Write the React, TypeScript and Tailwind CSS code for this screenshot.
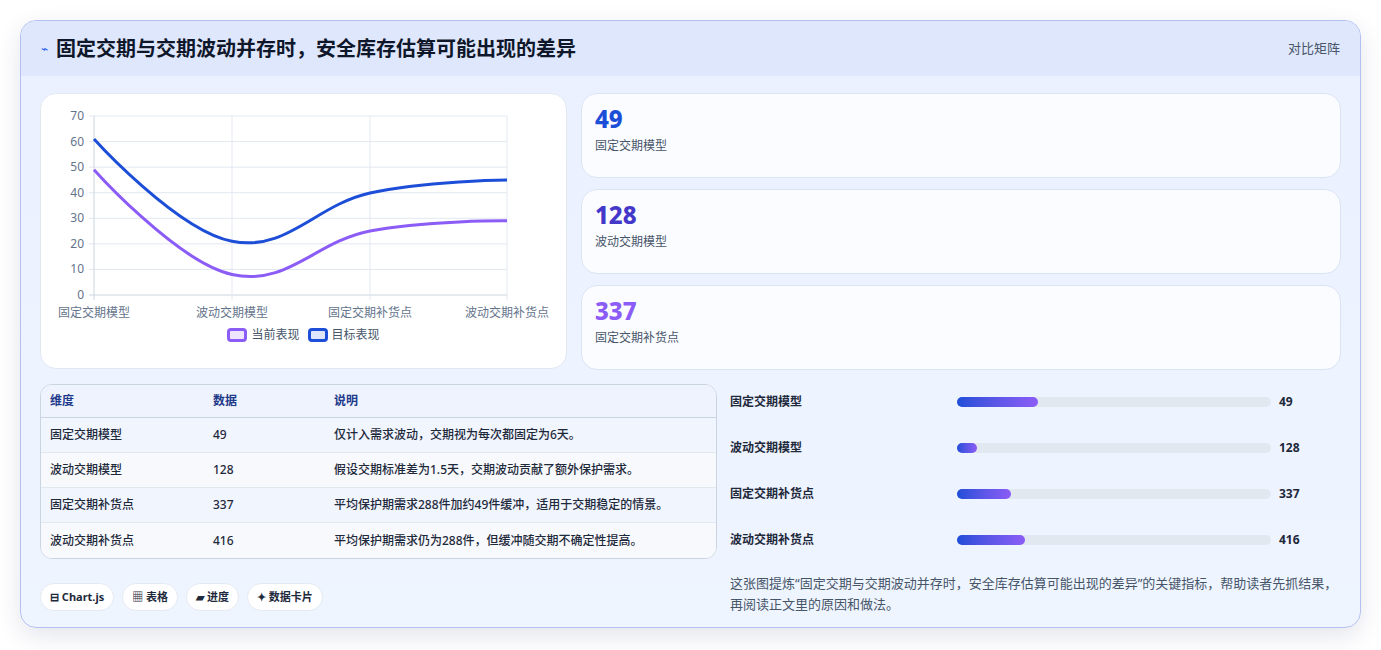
const font = { fontFamily: '"Noto Sans", "Noto Sans CJK SC", sans-serif' };

const stats = [
  { v: "49", label: "固定交期模型", color: "text-[#1d4ed8]" },
  { v: "128", label: "波动交期模型", color: "text-[#4338ca]" },
  { v: "337", label: "固定交期补货点", color: "text-[#8b5cf6]" },
];

const rows = [
  ["固定交期模型", "49", "仅计入需求波动，交期视为每次都固定为6天。"],
  ["波动交期模型", "128", "假设交期标准差为1.5天，交期波动贡献了额外保护需求。"],
  ["固定交期补货点", "337", "平均保护期需求288件加约49件缓冲，适用于交期稳定的情景。"],
  ["波动交期补货点", "416", "平均保护期需求仍为288件，但缓冲随交期不确定性提高。"],
];

const bars = [
  { label: "固定交期模型", v: "49", w: 81 },
  { label: "波动交期模型", v: "128", w: 20 },
  { label: "固定交期补货点", v: "337", w: 54 },
  { label: "波动交期补货点", v: "416", w: 68 },
];

function Chart() {
  const yTicks = [0, 10, 20, 30, 40, 50, 60, 70];
  const xs = [53, 191, 329, 466];
  const xl = ["固定交期模型", "波动交期模型", "固定交期补货点", "波动交期补货点"];
  const y = (v: number) => 201 - v * 2.557;
  return (
    <svg width="527" height="236" className="block">
      {yTicks.map((t) => (
        <g key={t}>
          <line x1="48" x2="466" y1={y(t)} y2={y(t)} stroke={t === 0 ? "#cbd5e1" : "#e2e8f0"} />
          <text x="43" y={y(t) + 4} textAnchor="end" fontSize="12" fill="#64748b">{t}</text>
        </g>
      ))}
      {xs.map((x, i) => (
        <g key={x}>
          <line x1={x} x2={x} y1="22" y2="206" stroke={i === 0 ? "#cbd5e1" : "#e2e8f0"} />
          <text x={x} y="223" textAnchor="middle" fontSize="12" fill="#64748b">{xl[i]}</text>
        </g>
      ))}
      <path d="M53,75.7 C53,75.7 135.8,168.2 191,180.5 C246.2,192.8 274,147.7 329,137 C384,126.3 466,126.8 466,126.8" fill="none" stroke="#8b5cf6" strokeWidth="3" />
      <path d="M53,45 C53,45 135.8,136.5 191,147.3 C246.2,158.1 274,111.3 329,99 C384,86.7 466,86 466,86" fill="none" stroke="#1d4ed8" strokeWidth="3" />
    </svg>
  );
}

export default function App() {
  return (
    <div className="min-h-screen bg-white p-5" style={font}>
      <div className="rounded-2xl border border-[#b4c0f0] bg-gradient-to-b from-[#eaf0ff] to-[#eff5ff] shadow-[0_8px_24px_rgba(30,41,99,0.12)] overflow-hidden">
        <div className="h-[55px] bg-[#dfe7fd] flex items-center justify-between px-5">
          <div className="flex items-center gap-2">
            <span className="text-[#2563eb] text-xs">⌁</span>
            <h1 className="text-[20px] font-bold text-[#0f172a]">固定交期与交期波动并存时，安全库存估算可能出现的差异</h1>
          </div>
          <span className="text-[13px] text-[#475569]">对比矩阵</span>
        </div>
        <div className="px-[19px] pt-[17px] pb-3">
          <div className="flex gap-[14px]">
            <div className="w-[527px] h-[276px] shrink-0 bg-white rounded-2xl border border-[#e2e8f0]">
              <Chart />
              <div className="flex justify-center gap-2 text-[12px] text-[#475569] -mt-[4px]">
                <span className="flex items-center gap-1"><span className="w-[20px] h-[14px] border-[3px] border-[#8b5cf6] bg-[#ede4fe] rounded-sm" />当前表现</span>
                <span className="flex items-center gap-1"><span className="w-[20px] h-[14px] border-[3px] border-[#1d4ed8] bg-[#dde6fb] rounded-sm" />目标表现</span>
              </div>
            </div>
            <div className="flex-1 flex flex-col gap-[11px]">
              {stats.map((s) => (
                <div key={s.v} className="h-[85px] bg-[#fbfcff] rounded-2xl border border-[#dbe3f4] px-[13px] pt-[9px]">
                  <div className={`text-[24px] font-extrabold leading-8 ${s.color}`}>{s.v}</div>
                  <div className="text-[12px] text-[#475569] mt-[2px]">{s.label}</div>
                </div>
              ))}
            </div>
          </div>
          <div className="flex gap-[13px] mt-[14px]">
            <div className="w-[677px] shrink-0">
              <div className="rounded-xl border border-[#cbd5e1] overflow-hidden bg-white text-[12px] font-medium">
                <div className="flex h-[33px] items-center bg-[#eef3fd] border-b border-[#cbd5e1] font-bold text-[#1e3a8a]">
                  <span className="w-[172px] pl-[9px]">维度</span>
                  <span className="w-[121px]">数据</span>
                  <span>说明</span>
                </div>
                {rows.map((r, i) => (
                  <div key={r[0]} className={`flex h-[35px] items-center text-[#1e293b] ${i < 3 ? "border-b border-[#e2e8f0]" : ""} ${i % 2 ? "bg-[#f7f9fc]" : "bg-[#f0f5fe]"}`}>
                    <span className="w-[172px] pl-[9px]">{r[0]}</span>
                    <span className="w-[121px]">{r[1]}</span>
                    <span>{r[2]}</span>
                  </div>
                ))}
              </div>
              <div className="flex gap-2 mt-[24px] text-[11px] font-bold text-[#1e293b]">
                <span className="h-[28px] px-[9px] flex items-center rounded-full bg-white border border-[#e5e9f2]">⊟ Chart.js</span>
                <span className="h-[28px] px-[9px] flex items-center rounded-full bg-white border border-[#e5e9f2]">▦ 表格</span>
                <span className="h-[28px] px-[9px] flex items-center rounded-full bg-white border border-[#e5e9f2]">▰ 进度</span>
                <span className="h-[28px] px-[9px] flex items-center rounded-full bg-white border border-[#e5e9f2]">✦ 数据卡片</span>
              </div>
            </div>
            <div className="flex-1">
              <div className="flex flex-col gap-[31px] pt-[10px]">
                {bars.map((b) => (
                  <div key={b.label} className="flex items-center h-[15px] text-[12px] font-semibold text-[#1e293b]">
                    <span className="w-[227px]">{b.label}</span>
                    <div className="w-[314px] h-[10px] rounded-full bg-[#e2e8f0]">
                      <div className="h-full rounded-full bg-gradient-to-r from-[#1d4ed8] to-[#8b5cf6]" style={{ width: b.w }} />
                    </div>
                    <span className="ml-2 font-bold">{b.v}</span>
                  </div>
                ))}
              </div>
              <p className="mt-[26px] text-[13px] leading-[21px] text-[#475569] -mr-2">
                这张图提炼“固定交期与交期波动并存时，安全库存估算可能出现的差异”的关键指标，帮助读者先抓结果，再阅读正文里的原因和做法。
              </p>
            </div>
          </div>
        </div>
      </div>
    </div>
  );
}
